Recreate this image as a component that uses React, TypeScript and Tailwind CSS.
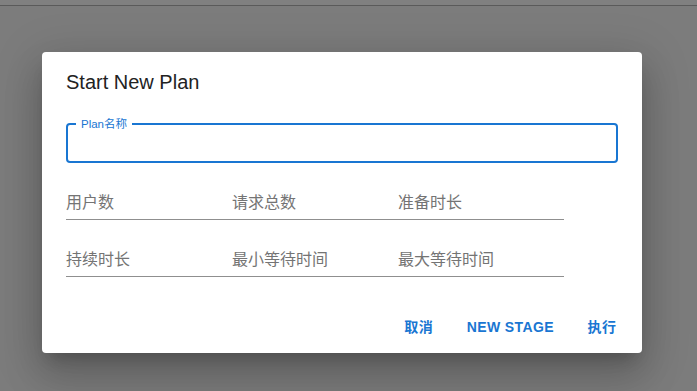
import React from 'react';

const FONT = { fontFamily: '"Liberation Sans", "Noto Sans CJK SC", sans-serif' };

const ROWS = [
  ['用户数', '请求总数', '准备时长'],
  ['持续时长', '最小等待时间', '最大等待时间'],
];

export default function App() {
  return (
    <div className="w-[697px] h-[391px] overflow-hidden bg-[#7c7c7c]" style={FONT}>
      <div className="h-[5px] bg-[#808080]" />
      <div className="h-px bg-[#5a5a5a]" />
      <div className="pl-[42px] pt-[46px]">
        <div className="w-[600px] bg-white rounded shadow-[0_11px_15px_-7px_rgba(0,0,0,0.2),0_24px_38px_3px_rgba(0,0,0,0.14),0_9px_46px_8px_rgba(0,0,0,0.12)]">
          {/* Title */}
          <h2 className="px-6 pt-[14px] h-[48px] text-[20px] leading-8 text-[#222]">Start New Plan</h2>

          <div className="px-6">
            {/* Outlined field */}
            <div className="relative mt-[23px] h-[40px] rounded border-2 border-[#1976d2]">
              <span className="absolute -top-[9px] left-[8px] bg-white px-[5px] text-[11.5px] leading-4 text-[#1976d2]">
                Plan名称
              </span>
            </div>

            {/* Underlined fields */}
            {ROWS.map((row, i) => (
              <div key={i} className="flex mt-[20px]">
                {row.map((label) => (
                  <div key={label} className="w-[166px] h-[37px] border-b border-[#8f8f8f] flex items-center pt-[4px]">
                    <span className="text-[16px] text-[#747474]">{label}</span>
                  </div>
                ))}
              </div>
            ))}
          </div>

          {/* Actions */}
          <div className="flex justify-end gap-2 p-2 mt-[24px]">
            {['取消', 'NEW STAGE', '执行'].map((b) => (
              <button
                key={b}
                className="min-w-[64px] h-9 px-2 rounded text-[14px] font-semibold tracking-[0.4px] text-[#1976d2]"
              >
                {b}
              </button>
            ))}
          </div>
        </div>
      </div>
    </div>
  );
}
